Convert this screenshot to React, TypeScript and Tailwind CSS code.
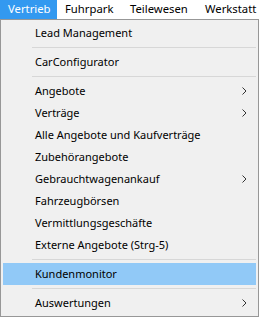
const items: (string | { label: string; sub?: boolean; active?: boolean })[] = [
  { label: 'Lead Management' },
  '-',
  { label: 'CarConfigurator' },
  '-',
  { label: 'Angebote', sub: true },
  { label: 'Verträge', sub: true },
  { label: 'Alle Angebote und Kaufverträge' },
  { label: 'Zubehörangebote' },
  { label: 'Gebrauchtwagenankauf', sub: true },
  { label: 'Fahrzeugbörsen' },
  { label: 'Vermittlungsgeschäfte' },
  { label: 'Externe Angebote (Strg-5)' },
  '-',
  { label: 'Kundenmonitor', active: true },
  '-',
  { label: 'Auswertungen', sub: true },
];

function Chevron() {
  return (
    <svg width="5" height="8" viewBox="0 0 5 8" className="mr-[9px]">
      <path d="M0.5 0.5 L4 4 L0.5 7.5" fill="none" stroke="#333" strokeWidth="1" />
    </svg>
  );
}

export default function App() {
  return (
    <div
      className="w-[262px] h-[317px] bg-white text-[11px] text-black overflow-hidden"
      style={{ fontFamily: '"Noto Sans", "Open Sans", sans-serif' }}
    >
      {/* menu bar */}
      <div className="flex h-[19px] items-center whitespace-nowrap text-[11.3px]">
        <div className="h-full flex items-center shrink-0 pl-[8px] bg-[#3399f0] text-white w-[57px]">Vertrieb</div>
        <div className="shrink-0 pl-[8px] w-[65px]">Fuhrpark</div>
        <div className="shrink-0 pl-[8px] w-[75px]">Teilewesen</div>
        <div className="shrink-0 pl-[8px]">Werkstatt</div>
      </div>

      {/* dropdown */}
      <div className="w-[259px] h-[298px] bg-[#f0f0f0] border border-[#979797] py-[2px] px-[2px]">
        {items.map((it, i) =>
          it === '-' ? (
            <div key={i} className="h-[7px] flex items-center pl-[29px]">
              <div className="h-px w-full bg-[#d7d7d7]" />
            </div>
          ) : typeof it === 'object' ? (
            <div
              key={i}
              className={`h-[22px] flex items-center justify-between pl-[32px] ${it.active ? 'bg-[#91c9f7]' : ''}`}
            >
              <span>{it.label}</span>
              {it.sub && <Chevron />}
            </div>
          ) : null
        )}
      </div>
    </div>
  );
}
